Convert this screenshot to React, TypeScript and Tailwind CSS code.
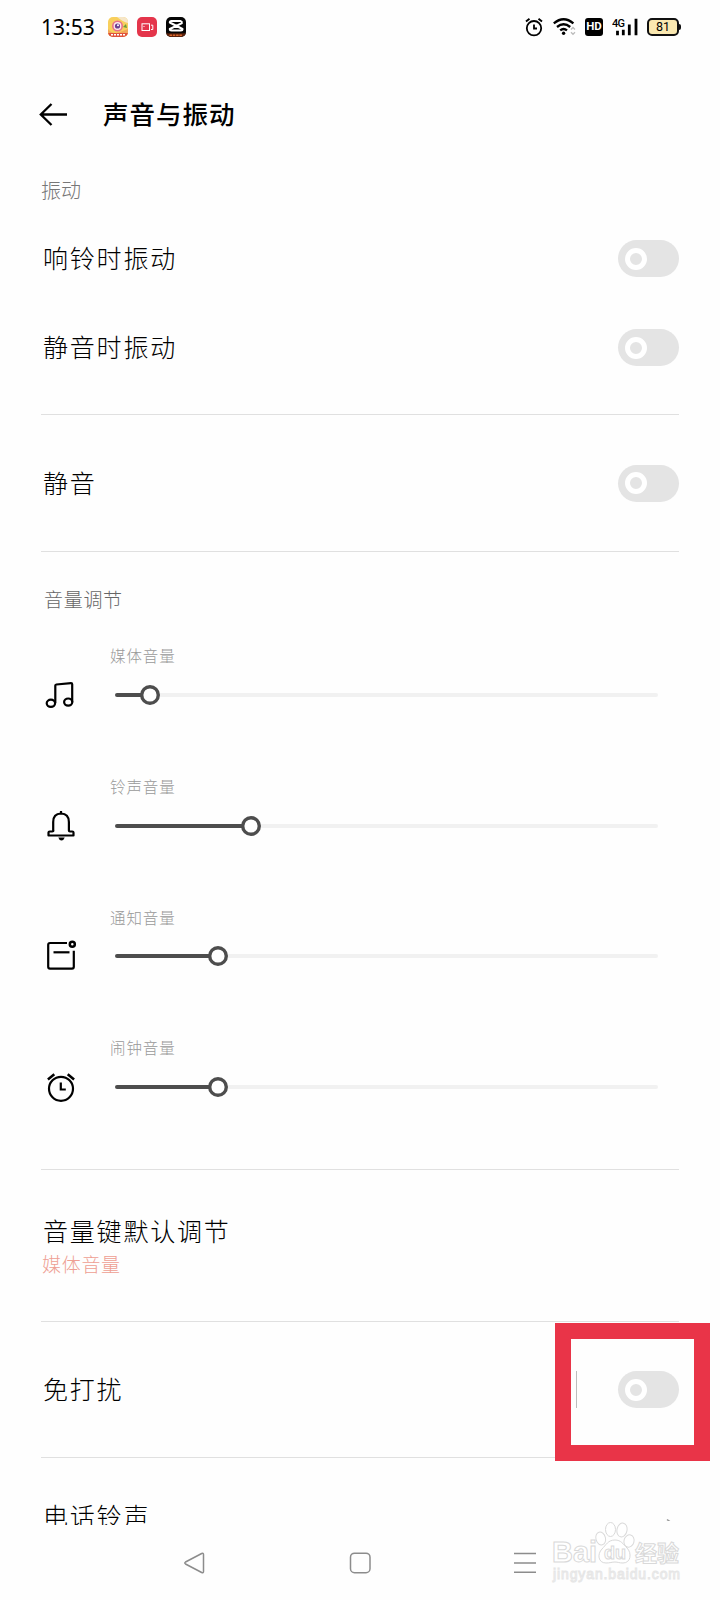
import type { ReactNode } from 'react';

// Sound & vibration settings screen.

const VOLUMES: { label: string; knob: number; icon: ReactNode }[] = [
  { label: '媒体音量', knob: 35, icon: <MusicIcon /> },
  { label: '铃声音量', knob: 136, icon: <BellIcon /> },
  { label: '通知音量', knob: 102.5, icon: <NoticeIcon /> },
  { label: '闹钟音量', knob: 102.5, icon: <AlarmIcon /> },
];

function MusicIcon() {
  return (
    <svg width="32" height="32" viewBox="2 0 32 32" fill="none" stroke="#000" strokeWidth="2.2">
      <path d="M12.3 24V6.6q0-1 1-1.1L28 4.2q1.2 0 1.2 1v18" />
      <ellipse cx="7.9" cy="24.3" rx="4.2" ry="3.6" />
      <ellipse cx="25.2" cy="23.1" rx="4.1" ry="3.6" />
    </svg>
  );
}

function BellIcon() {
  return (
    <svg width="32" height="32" viewBox="0 0 32 32" fill="none" stroke="#000" strokeWidth="2.2">
      <path
        d="M8.2 21.2V11.9Q8.2 3.8 16 3.5q7.8.3 7.9 8.400v8.600q0 1 1 1h2.300q1.300 0 1.300 1.100v2.900H3.500v-2.900q0-1.100 1.300-1.100h2.400q1.300 0 1.300-1"
        strokeLinejoin="round"
      />
      <path d="M16 1v3" />
      <path d="M13.300 27.600h6.400q-.8 2.800-3.200 2.800t-3.200-2.800z" fill="#000" stroke="none" />
    </svg>
  );
}

function NoticeIcon() {
  return (
    <svg width="32" height="32" viewBox="0 0 32 32" fill="none" stroke="#000" strokeWidth="2.2">
      <path d="M22 3H5Q3.200 3 3.200 4.800v22q0 1.900 1.800 1.900h22q1.800 0 1.800-1.900V10.800" />
      <path d="M8.500 12.300h16" />
      <circle cx="27.300" cy="4.300" r="2.500" strokeWidth="2.500" />
    </svg>
  );
}

function AlarmIcon() {
  return (
    <svg width="32" height="32" viewBox="0 0 32 32" fill="none" stroke="#000" strokeWidth="2.2">
      <circle cx="16" cy="17.800" r="12" />
      <path d="M15.800 11.500v7h5" />
      <path d="M2.900 8.500 9.300 3.200M22.700 3.200l6.400 5.300" strokeWidth="2.500" />
    </svg>
  );
}

function StatusBar() {
  return (
    <div className="flex h-[54px] items-center pl-[41px] pr-[39px]">
      <span className="w-[67px] font-['Noto_Sans'] text-[21px] font-normal leading-none">13:53</span>
      <div className="flex gap-[9px]">
        <svg width="20" height="20" viewBox="0 0 20 20">
          <clipPath id="game">
            <rect width="20" height="20" rx="5" />
          </clipPath>
          <g clipPath="url(#game)">
            <rect width="20" height="20" fill="#f8cf5c" />
            <path d="M9 0h11v6Q15 5 9 0" fill="#f6e6c8" />
            <path d="M0 12q4 6 12 3l8-3v8H0z" fill="#f2a65a" />
            <circle cx="9.500" cy="9" r="5.500" fill="#e8708a" />
            <circle cx="9.500" cy="9" r="3.900" fill="#fbe9ee" />
            <circle cx="9.500" cy="9" r="2.600" fill="#6a3f8f" />
            <circle cx="10" cy="8.300" r="1" fill="#fff" />
            <path d="m15 10 3-3 1 4z" fill="#6b9c3a" />
            <rect y="16" width="20" height="4" fill="#e0523c" />
            <path d="M3 17.800h14" stroke="#fff" strokeWidth="1.500" strokeDasharray="2 1" />
          </g>
        </svg>
        <svg width="20" height="20" viewBox="0 0 20 20" fill="none" stroke="#fff">
          <rect width="20" height="20" rx="5" fill="#e4354b" stroke="none" />
          <rect x="5" y="6.800" width="7.500" height="6.700" />
          <path d="M14 8.200h1.800v4.300H14M7 9v1" />
        </svg>
        <svg width="20" height="20" viewBox="0 0 20 20">
          <clipPath id="cut">
            <rect width="20" height="20" rx="5" />
          </clipPath>
          <g clipPath="url(#cut)">
            <rect width="20" height="20" fill="#050505" />
            <path
              d="M16.500 5.800 14.500 4H5.500Q3.800 4 3.800 5.500L16.500 12v.500q0 1-1.500 1H5.500q-1.700 0-1.700-1.500L16.500 5.800"
              fill="none"
              stroke="#fff"
              strokeWidth="2"
              strokeLinejoin="round"
            />
            <rect y="16.300" width="20" height="4" fill="#5a210c" />
            <path d="M3.500 18.200h13" stroke="#d9662b" strokeWidth="1.600" strokeDasharray="2.500 .8" />
          </g>
        </svg>
      </div>

      <div className="ml-auto flex items-center">
        <svg width="18" height="20" viewBox="0 0 18 20" fill="none" stroke="#000" strokeWidth="1.800">
          <circle cx="9" cy="11.200" r="7.200" />
          <path d="M9 7.500v4h3" />
          <path d="m1 4.500 3.500-2.800M17 4.500l-3.500-2.800" strokeWidth="1.900" />
        </svg>
        <svg className="ml-[10px]" width="24" height="20" viewBox="0 0 24 20" fill="none" stroke="#000">
          <path d="M.8 6.400q9.800-8.300 19.600 0M4 10q6.600-5.600 13.200 0M7.200 13.400q3.400-2.900 6.800 0" strokeWidth="2.300" />
          <circle cx="10.600" cy="16.200" r="1.700" fill="#000" stroke="none" />
          <path d="m18 12.500 2-2 2 2M18 15.300l2 2 2-2" stroke="#bbb" strokeWidth="1.300" />
        </svg>
        <div className="ml-[8px] flex h-[18px] w-[18px] items-center justify-center rounded-[3px] bg-black font-['Roboto'] text-[11.500px] font-bold leading-none text-white">
          HD
        </div>
        <svg className="ml-[9px]" width="26" height="20" viewBox="0 0 26 20">
          <text x="0" y="9.500" fontFamily="Roboto" fontSize="11" fontWeight="500" textLength="13">
            4G
          </text>
          <path d="M5.500 18.300v-4.500M11.300 18.300v-5.500M17.300 18.300V7.600M24 18.300V1.800" stroke="#000" strokeWidth="2.800" />
        </svg>
        <div className="ml-[9px] flex items-center">
          <div className="flex h-[18px] w-[32px] items-center justify-center rounded-[5px] border-2 border-[#111] bg-[#fae8b0] font-['Roboto'] text-[12.500px] font-normal leading-none">
            81
          </div>
          <div className="h-[6px] w-[2px] rounded-r-sm bg-[#111]" />
        </div>
      </div>
    </div>
  );
}

function Toggle() {
  return (
    <button className="flex h-[37px] w-[61px] items-center rounded-full bg-[#e4e4e4] pl-[7px]">
      <span className="h-[22px] w-[22px] rounded-full border-5 border-white" />
    </button>
  );
}

function Row({ label, height, children }: { label: string; height: string; children?: ReactNode }) {
  return (
    <div className={`flex items-center justify-between ${height}`}>
      <span className="pb-[2px] pl-[2px] text-[25px] leading-none tracking-[1.800px]">{label}</span>
      {children}
    </div>
  );
}

function VolumeSlider({ label, knob, icon }: { label: string; knob: number; icon: ReactNode }) {
  return (
    <div className="h-[130.700px]">
      <div className="flex h-[22px] items-center pl-[69px] text-[15.500px] leading-none tracking-[0.900px] text-[#999]">
        {label}
      </div>
      <div className="flex h-14 items-center">
        <div className="w-[74px] pl-[4px]">{icon}</div>
        <div className="flex w-[543px] items-center">
          <div className="h-1 rounded-l-full bg-[#4d4d4d]" style={{ width: knob - 9 }} />
          <svg className="-ml-px shrink-0" width="20" height="20" viewBox="0 0 20 20">
            <circle cx="10" cy="10" r="8.300" fill="#fff" stroke="#4d4d4d" strokeWidth="3.400" />
          </svg>
          <div className="h-1 flex-1 rounded-r-full bg-[#f1f1f1]" />
        </div>
      </div>
    </div>
  );
}

function NavBar() {
  return (
    <div className="flex h-[75px] items-center justify-between pl-[183px] pr-[184px]">
      <svg width="22" height="22" viewBox="0 0 22 22" fill="none" stroke="#8c8c8c" strokeWidth="1.500">
        <path d="M2.500 10 18.700 1.500Q20.500.900 20.500 2.500v17q0 1.600-1.800 1L2.500 12q-1.400-1 0-2z" strokeLinejoin="round" />
      </svg>
      <svg width="22" height="22" viewBox="0 0 22 22" fill="none" stroke="#8c8c8c" strokeWidth="1.500">
        <rect x="1.500" y="1.200" width="19.500" height="19.500" rx="4" />
      </svg>
      <svg width="22" height="22" viewBox="0 0 22 22" stroke="#8c8c8c" strokeWidth="1.500">
        <path d="M0 1.500h22M0 11h22M0 20.300h22" />
      </svg>
    </div>
  );
}

function Watermark() {
  return (
    <svg
      className="absolute left-[550px] top-[1518px]"
      width="134"
      height="68"
      viewBox="0 0 134 68"
      fill="#fff"
      stroke="#d9d9d9"
      strokeWidth="1"
      fontFamily="'Liberation Sans', 'Noto Sans CJK SC', sans-serif"
    >
      <text x="2" y="44" fontSize="29" fontWeight="700" textLength="45" lengthAdjust="spacingAndGlyphs">
        Bai
      </text>
      <ellipse cx="50.700" cy="20.500" rx="4.800" ry="6.500" transform="rotate(-15 50.700 20.500)" />
      <ellipse cx="60.500" cy="11.500" rx="5" ry="7" />
      <ellipse cx="72" cy="12" rx="5" ry="7" transform="rotate(12 72 12)" />
      <ellipse cx="79" cy="23" rx="5" ry="6.300" transform="rotate(15 79 23)" />
      <path d="M65 22c6 0 8 4 12 8 5 5 4 15-4 15-4 0-5-1-8-1s-5 1-9 1c-8 0-9-9-4-14 4-4 6-9 13-9z" />
      <text x="54" y="41" fontSize="19" fontWeight="700" textLength="22" lengthAdjust="spacingAndGlyphs">
        du
      </text>
      <text x="85" y="42.500" fontSize="22" fontWeight="700" textLength="44">
        经验
      </text>
      <text x="3" y="61" fontSize="14" fontWeight="400" textLength="127" stroke="#e6e6e6" strokeWidth="1">
        jingyan.baidu.com
      </text>
    </svg>
  );
}

export default function App() {
  return (
    <div className="relative h-[1600px] w-[720px] overflow-hidden bg-[#fefefe] font-['Noto_Sans_CJK_SC',sans-serif] font-light text-black">
      <StatusBar />

      <header className="flex h-[120px] items-center pl-[39px]">
        <svg width="29" height="24" viewBox="0 0 29 24" fill="none" stroke="#000" strokeWidth="2.300">
          <path d="M28 12.500H2M12.500 2 1.800 12.500 12.500 23" />
        </svg>
        <h1 className="pb-[3px] pl-[35px] text-[25.500px] font-medium leading-none tracking-[1px]">声音与振动</h1>
      </header>

      <main className="h-[1351px] overflow-hidden px-[41px]">
        <section className="h-[241px] border-b border-[#e0e0e0]">
          <h2 className="mb-2 flex h-8 items-center text-[20px] leading-none text-[#777]">振动</h2>
          <Row label="响铃时振动" height="h-[89px]">
            <Toggle />
          </Row>
          <Row label="静音时振动" height="h-[89px]">
            <Toggle />
          </Row>
        </section>

        <section className="border-b border-[#e0e0e0]">
          <Row label="静音" height="h-[136px]">
            <Toggle />
          </Row>
        </section>

        <section className="h-[618px] border-b border-[#e0e0e0]">
          <h2 className="flex h-[92px] items-center pl-[3px] text-[19px] leading-none tracking-[0.700px] text-[#666]">
            音量调节
          </h2>
          <div className="pt-px">
            {VOLUMES.map((v) => (
              <VolumeSlider key={v.label} {...v} />
            ))}
          </div>
        </section>

        <section className="h-[152px] border-b border-[#e0e0e0] pt-[45px]">
          <Row label="音量键默认调节" height="h-8" />
          <div className="pl-px pt-[7px] text-[19px] leading-none tracking-[0.700px] text-[#ee9f93]">媒体音量</div>
        </section>

        <section className="border-b border-[#e0e0e0]">
          <Row label="免打扰" height="h-[135px]">
            <div className="flex items-center gap-[41px]">
              <div className="h-[37px] w-px bg-[#bdbdbd]" />
              <Toggle />
            </div>
          </Row>
        </section>

        <section className="pr-[7px] pt-[42px]">
          <Row label="电话铃声" height="h-8">
            <svg width="6" height="10" viewBox="0 0 6 10" fill="none" stroke="#999" strokeWidth="1.500">
              <path d="M1 8.500 4.500 11" />
            </svg>
          </Row>
        </section>
      </main>

      <NavBar />

      {/* highlight around the do-not-disturb switch */}
      <div className="absolute left-[555px] top-[1323px] h-[138px] w-[155px] border-[16px] border-[#e93448]" />
      <Watermark />
    </div>
  );
}
